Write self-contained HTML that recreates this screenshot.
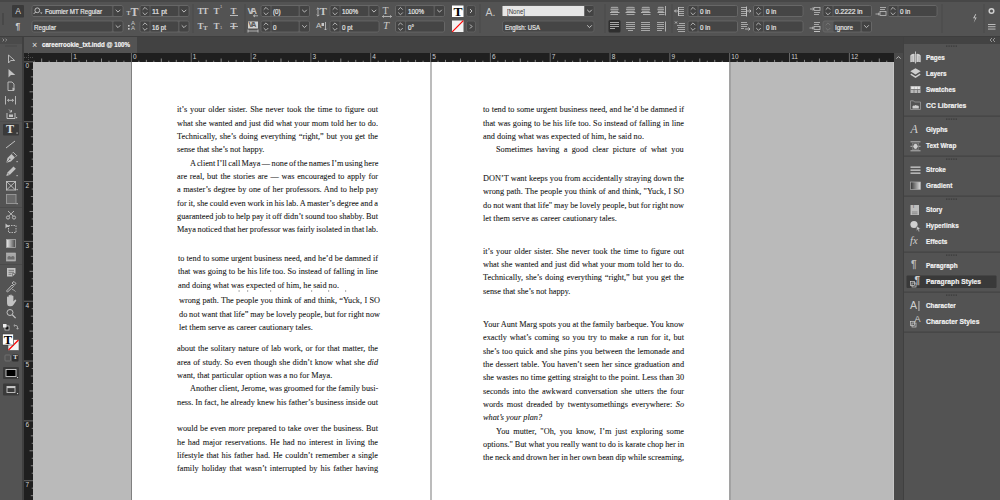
<!DOCTYPE html>
<html><head><meta charset="utf-8">
<style>
*{margin:0;padding:0;box-sizing:border-box}
html,body{width:1000px;height:500px;overflow:hidden;background:#535353;font-family:"Liberation Sans",sans-serif;position:relative}
.a{position:absolute}
.ct,.ic,.rl,.pl,.tx{position:absolute;white-space:pre;line-height:1}
.ct{font-size:7.6px;color:#e6e6e6;line-height:10px}
.ut{position:absolute;white-space:pre;line-height:10px;transform-origin:0 0;-webkit-text-stroke:0.2px currentColor}
.ic{line-height:1}
.rl{font-size:6.5px;color:#cfcfcf;line-height:7px}
.pl{font-size:8.2px;font-weight:bold;color:#ececec;line-height:10px}
.tx{transform-origin:0 0;font-family:"Liberation Serif",serif;font-size:8.27px;color:#161616;line-height:10px;-webkit-text-stroke:0.08px #161616}
#topstrip{left:0;top:0;width:1000px;height:2px;background:#474747}
#ctrl{left:0;top:2px;width:1000px;height:34px;background:#535353}
#tbar{left:0;top:36px;width:22px;height:464px;background:#535353}
#tbarhdr{left:0;top:36px;width:22px;height:8px;background:#4a4a4a}
#tsep{left:22px;top:36px;width:2px;height:464px;background:#404040}
#tabbar{left:24px;top:36px;width:880px;height:17px;background:#424242}
#tab{left:24px;top:36px;width:113px;height:17px;background:#535353}
#hruler{left:24px;top:53px;width:870px;height:9px;background:#1f1f1f}
#vruler{left:24px;top:53px;width:9px;height:447px;background:#1f1f1f}
#paste{left:33px;top:62px;width:861px;height:438px;background:#bababa}
#page1{left:132px;top:62px;width:298px;height:438px;background:#fff}
#page2{left:432px;top:62px;width:297px;height:438px;background:#fff}
#pb1{left:131px;top:62px;width:1px;height:438px;background:#808080}
#pb2{left:430px;top:62px;width:2px;height:438px;background:#bcbcbc}
#pb3{left:729px;top:62px;width:2px;height:438px;background:#a2a2a2}
#scroll{left:894px;top:53px;width:9px;height:447px;background:#4a4a4a}
#psep{left:903px;top:36px;width:1px;height:464px;background:#404040}
#panel{left:904px;top:44px;width:96px;height:456px;background:#535353}
#panelhdr{left:904px;top:36px;width:96px;height:8px;background:#434343}
svg{position:absolute;left:0;top:0}
</style></head><body>
<div class="a" id="topstrip"></div>
<div class="a" id="ctrl"></div>
<div class="a" id="tbar"></div>
<div class="a" id="tbarhdr"></div>
<div class="a" id="tsep"></div>
<div class="a" id="tabbar"></div>
<div class="a" id="tab"></div>
<div class="a" id="hruler"></div>
<div class="a" id="vruler"></div>
<div class="a" id="paste"></div>
<div class="a" id="page1"></div>
<div class="a" id="page2"></div>
<div class="a" id="pb1"></div>
<div class="a" id="pb2"></div>
<div class="a" id="pb3"></div>
<div class="a" id="scroll"></div>
<div class="a" id="psep"></div>
<div class="a" id="panelhdr"></div>
<div class="a" id="panel"></div>
<div class="a" style="left:0;top:35.5px;width:1000px;height:1px;background:#3e3e3e"></div>
<svg width="1000" height="500" viewBox="0 0 1000 500"><rect x="32.0" y="5.5" width="91.0" height="11" rx="2" fill="#5a5a5a" stroke="#676767" stroke-width="1"/><rect x="113.5" y="6" width="9" height="10" rx="1" fill="#434343"/><path d="M115.7 9.8L118.0 12.1L120.3 9.8" fill="none" stroke="#c8c8c8" stroke-width="0.9"/><rect x="32.5" y="6" width="79.5" height="10" rx="1" fill="#454545"/><rect x="32.0" y="21.0" width="91.0" height="11" rx="2" fill="#5a5a5a" stroke="#676767" stroke-width="1"/><rect x="113.5" y="21.5" width="9" height="10" rx="1" fill="#434343"/><path d="M115.7 25.3L118.0 27.6L120.3 25.3" fill="none" stroke="#c8c8c8" stroke-width="0.9"/><rect x="32.5" y="21.5" width="79.5" height="10" rx="1" fill="#454545"/><rect x="140.0" y="5.5" width="49.0" height="11" rx="2" fill="#5a5a5a" stroke="#676767" stroke-width="1"/><rect x="140.5" y="6" width="9" height="10" rx="1" fill="#434343"/><path d="M142.7 9.7L145.0 7.4L147.3 9.7" fill="none" stroke="#bdbdbd" stroke-width="0.9"/><path d="M142.7 12.5L145.0 14.799999999999999L147.3 12.5" fill="none" stroke="#bdbdbd" stroke-width="0.9"/><rect x="179.5" y="6" width="9" height="10" rx="1" fill="#434343"/><path d="M181.7 9.8L184.0 12.1L186.3 9.8" fill="none" stroke="#c8c8c8" stroke-width="0.9"/><rect x="150.5" y="6" width="27.5" height="10" rx="1" fill="#454545"/><rect x="140.0" y="21.0" width="49.0" height="11" rx="2" fill="#5a5a5a" stroke="#676767" stroke-width="1"/><rect x="140.5" y="21.5" width="9" height="10" rx="1" fill="#434343"/><path d="M142.7 25.2L145.0 22.9L147.3 25.2" fill="none" stroke="#bdbdbd" stroke-width="0.9"/><path d="M142.7 28.0L145.0 30.3L147.3 28.0" fill="none" stroke="#bdbdbd" stroke-width="0.9"/><rect x="179.5" y="21.5" width="9" height="10" rx="1" fill="#434343"/><path d="M181.7 25.3L184.0 27.6L186.3 25.3" fill="none" stroke="#c8c8c8" stroke-width="0.9"/><rect x="150.5" y="21.5" width="27.5" height="10" rx="1" fill="#454545"/><rect x="261.0" y="5.5" width="48.5" height="11" rx="2" fill="#5a5a5a" stroke="#676767" stroke-width="1"/><rect x="261.5" y="6" width="9" height="10" rx="1" fill="#434343"/><path d="M263.7 9.7L266.0 7.4L268.3 9.7" fill="none" stroke="#bdbdbd" stroke-width="0.9"/><path d="M263.7 12.5L266.0 14.799999999999999L268.3 12.5" fill="none" stroke="#bdbdbd" stroke-width="0.9"/><rect x="300" y="6" width="9" height="10" rx="1" fill="#434343"/><path d="M302.2 9.8L304.5 12.1L306.8 9.8" fill="none" stroke="#c8c8c8" stroke-width="0.9"/><rect x="271.5" y="6" width="27.0" height="10" rx="1" fill="#454545"/><rect x="261.0" y="21.0" width="48.5" height="11" rx="2" fill="#5a5a5a" stroke="#676767" stroke-width="1"/><rect x="261.5" y="21.5" width="9" height="10" rx="1" fill="#434343"/><path d="M263.7 25.2L266.0 22.9L268.3 25.2" fill="none" stroke="#bdbdbd" stroke-width="0.9"/><path d="M263.7 28.0L266.0 30.3L268.3 28.0" fill="none" stroke="#bdbdbd" stroke-width="0.9"/><rect x="300" y="21.5" width="9" height="10" rx="1" fill="#434343"/><path d="M302.2 25.3L304.5 27.6L306.8 25.3" fill="none" stroke="#c8c8c8" stroke-width="0.9"/><rect x="271.5" y="21.5" width="27.0" height="10" rx="1" fill="#454545"/><rect x="330.0" y="5.5" width="49.0" height="11" rx="2" fill="#5a5a5a" stroke="#676767" stroke-width="1"/><rect x="330.5" y="6" width="9" height="10" rx="1" fill="#434343"/><path d="M332.7 9.7L335.0 7.4L337.3 9.7" fill="none" stroke="#bdbdbd" stroke-width="0.9"/><path d="M332.7 12.5L335.0 14.799999999999999L337.3 12.5" fill="none" stroke="#bdbdbd" stroke-width="0.9"/><rect x="369.5" y="6" width="9" height="10" rx="1" fill="#434343"/><path d="M371.7 9.8L374.0 12.1L376.3 9.8" fill="none" stroke="#c8c8c8" stroke-width="0.9"/><rect x="340.5" y="6" width="27.5" height="10" rx="1" fill="#454545"/><rect x="330.0" y="21.0" width="49.0" height="11" rx="2" fill="#5a5a5a" stroke="#676767" stroke-width="1"/><rect x="330.5" y="21.5" width="9" height="10" rx="1" fill="#434343"/><path d="M332.7 25.2L335.0 22.9L337.3 25.2" fill="none" stroke="#bdbdbd" stroke-width="0.9"/><path d="M332.7 28.0L335.0 30.3L337.3 28.0" fill="none" stroke="#bdbdbd" stroke-width="0.9"/><rect x="340.5" y="21.5" width="38.0" height="10" rx="1" fill="#454545"/><rect x="395.5" y="5.5" width="49" height="11" rx="2" fill="#5a5a5a" stroke="#676767" stroke-width="1"/><rect x="396" y="6" width="9" height="10" rx="1" fill="#434343"/><path d="M398.2 9.7L400.5 7.4L402.8 9.7" fill="none" stroke="#bdbdbd" stroke-width="0.9"/><path d="M398.2 12.5L400.5 14.799999999999999L402.8 12.5" fill="none" stroke="#bdbdbd" stroke-width="0.9"/><rect x="435" y="6" width="9" height="10" rx="1" fill="#434343"/><path d="M437.2 9.8L439.5 12.1L441.8 9.8" fill="none" stroke="#c8c8c8" stroke-width="0.9"/><rect x="406" y="6" width="27.5" height="10" rx="1" fill="#454545"/><rect x="395.5" y="21.0" width="49" height="11" rx="2" fill="#5a5a5a" stroke="#676767" stroke-width="1"/><rect x="396" y="21.5" width="9" height="10" rx="1" fill="#434343"/><path d="M398.2 25.2L400.5 22.9L402.8 25.2" fill="none" stroke="#bdbdbd" stroke-width="0.9"/><path d="M398.2 28.0L400.5 30.3L402.8 28.0" fill="none" stroke="#bdbdbd" stroke-width="0.9"/><rect x="406" y="21.5" width="38" height="10" rx="1" fill="#454545"/><rect x="688.0" y="5.5" width="49.5" height="11" rx="2" fill="#5a5a5a" stroke="#676767" stroke-width="1"/><rect x="688.5" y="6" width="9" height="10" rx="1" fill="#434343"/><path d="M690.7 9.7L693.0 7.4L695.3 9.7" fill="none" stroke="#bdbdbd" stroke-width="0.9"/><path d="M690.7 12.5L693.0 14.799999999999999L695.3 12.5" fill="none" stroke="#bdbdbd" stroke-width="0.9"/><rect x="698.5" y="6" width="38.5" height="10" rx="1" fill="#454545"/><rect x="688.0" y="21.0" width="49.5" height="11" rx="2" fill="#5a5a5a" stroke="#676767" stroke-width="1"/><rect x="688.5" y="21.5" width="9" height="10" rx="1" fill="#434343"/><path d="M690.7 25.2L693.0 22.9L695.3 25.2" fill="none" stroke="#bdbdbd" stroke-width="0.9"/><path d="M690.7 28.0L693.0 30.3L695.3 28.0" fill="none" stroke="#bdbdbd" stroke-width="0.9"/><rect x="698.5" y="21.5" width="38.5" height="10" rx="1" fill="#454545"/><rect x="753.5" y="5.5" width="49.5" height="11" rx="2" fill="#5a5a5a" stroke="#676767" stroke-width="1"/><rect x="754" y="6" width="9" height="10" rx="1" fill="#434343"/><path d="M756.2 9.7L758.5 7.4L760.8 9.7" fill="none" stroke="#bdbdbd" stroke-width="0.9"/><path d="M756.2 12.5L758.5 14.799999999999999L760.8 12.5" fill="none" stroke="#bdbdbd" stroke-width="0.9"/><rect x="764" y="6" width="38.5" height="10" rx="1" fill="#454545"/><rect x="753.5" y="21.0" width="49.5" height="11" rx="2" fill="#5a5a5a" stroke="#676767" stroke-width="1"/><rect x="754" y="21.5" width="9" height="10" rx="1" fill="#434343"/><path d="M756.2 25.2L758.5 22.9L760.8 25.2" fill="none" stroke="#bdbdbd" stroke-width="0.9"/><path d="M756.2 28.0L758.5 30.3L760.8 28.0" fill="none" stroke="#bdbdbd" stroke-width="0.9"/><rect x="764" y="21.5" width="38.5" height="10" rx="1" fill="#454545"/><rect x="823.0" y="5.5" width="48.5" height="11" rx="2" fill="#5a5a5a" stroke="#676767" stroke-width="1"/><rect x="823.5" y="6" width="9" height="10" rx="1" fill="#434343"/><path d="M825.7 9.7L828.0 7.4L830.3 9.7" fill="none" stroke="#bdbdbd" stroke-width="0.9"/><path d="M825.7 12.5L828.0 14.799999999999999L830.3 12.5" fill="none" stroke="#bdbdbd" stroke-width="0.9"/><rect x="833.5" y="6" width="37.5" height="10" rx="1" fill="#454545"/><rect x="823.0" y="21.0" width="48.5" height="11" rx="2" fill="#5a5a5a" stroke="#676767" stroke-width="1"/><path d="M825.7 25.2L828.0 22.9L830.3 25.2" fill="none" stroke="#777" stroke-width="0.9"/><path d="M825.7 28.0L828.0 30.3L830.3 28.0" fill="none" stroke="#777" stroke-width="0.9"/><rect x="862" y="21.5" width="9" height="10" rx="1" fill="#434343"/><path d="M864.2 25.3L866.5 27.6L868.8 25.3" fill="none" stroke="#c8c8c8" stroke-width="0.9"/><rect x="833.5" y="21.5" width="27.0" height="10" rx="1" fill="#454545"/><rect x="888.0" y="5.5" width="49.0" height="11" rx="2" fill="#5a5a5a" stroke="#676767" stroke-width="1"/><rect x="888.5" y="6" width="9" height="10" rx="1" fill="#434343"/><path d="M890.7 9.7L893.0 7.4L895.3 9.7" fill="none" stroke="#bdbdbd" stroke-width="0.9"/><path d="M890.7 12.5L893.0 14.799999999999999L895.3 12.5" fill="none" stroke="#bdbdbd" stroke-width="0.9"/><rect x="898.5" y="6" width="38.0" height="10" rx="1" fill="#454545"/><rect x="502.5" y="5.5" width="91.5" height="11" rx="2" fill="#4b4b4b" stroke="#5f5f5f"/><rect x="502.5" y="6" width="82" height="10" fill="#e6e6e6"/><rect x="584.5" y="6" width="9" height="10" fill="#434343"/><path d="M587.2 9.8L589.5 12.1L591.8 9.8" fill="none" stroke="#d0d0d0" stroke-width="0.9"/><rect x="502.5" y="21.0" width="91.5" height="11" rx="2" fill="#454545" stroke="#5f5f5f"/><path d="M587.2 25.3L589.5 27.6L591.8 25.3" fill="none" stroke="#d0d0d0" stroke-width="0.9"/><rect x="192.5" y="4" width="1" height="29" fill="#4a4a4a"/><rect x="244.5" y="4" width="1" height="29" fill="#4a4a4a"/><rect x="479.5" y="4" width="1" height="29" fill="#4a4a4a"/><rect x="604.5" y="4" width="1" height="29" fill="#4a4a4a"/><rect x="671.5" y="4" width="1" height="29" fill="#4a4a4a"/><rect x="941.5" y="4" width="1" height="29" fill="#4a4a4a"/><rect x="983.5" y="4" width="1" height="29" fill="#4a4a4a"/><rect x="2.5" y="13" width="1" height="12" fill="#3f3f3f"/><rect x="12" y="5" width="12" height="12.5" rx="1" fill="#3a3a3a"/><circle cx="37.3" cy="10.3" r="2.4" fill="none" stroke="#c8c8c8" stroke-width="0.9"/><path d="M35.6 12L33.6 14" stroke="#c8c8c8" stroke-width="1"/><path d="M40 12.5h2.5l-1.25 1.4z" fill="#c8c8c8"/><rect x="128" y="25" width="1.6" height="1.6" fill="#c8c8c8"/><rect x="128" y="28" width="1.6" height="1.6" fill="#c8c8c8"/><rect x="230" y="15" width="8" height="0.9" fill="#c8c8c8"/><rect x="230" y="26" width="8" height="0.9" fill="#c8c8c8"/><path d="M253.5 15.8h4.5M253.5 15.8l1.5-1.2M253.5 15.8l1.5 1.2" stroke="#c8c8c8" stroke-width="0.8" fill="none"/><rect x="248" y="21.5" width="10" height="7" fill="#d0d0d0"/><path d="M248 31h10M248 29.5v3M258 29.5v3" stroke="#c8c8c8" stroke-width="0.8"/><path d="M318 8v8M316.6 9.2l1.4-1.4 1.4 1.4M316.6 14.8l1.4 1.4 1.4-1.4" stroke="#c8c8c8" stroke-width="0.8" fill="none"/><path d="M325.5 22v8M324.3 28.8l1.2 1.2 1.2-1.2" stroke="#c8c8c8" stroke-width="0.8" fill="none"/><rect x="321.5" y="23" width="2.5" height="3" fill="#c8c8c8"/><path d="M382.5 16.5h9M383.7 15.3l-1.2 1.2 1.2 1.2M390.3 15.3l1.2 1.2-1.2 1.2" stroke="#c8c8c8" stroke-width="0.8" fill="none"/><rect x="452" y="5.5" width="11.5" height="11.5" fill="#fff"/><rect x="452" y="20.5" width="11.5" height="11.5" fill="#f2f2f2"/><path d="M452.2 31.8L463.3 20.7" stroke="#f00" stroke-width="1.2"/><rect x="466.5" y="5.5" width="9" height="11" rx="2" fill="#454545" stroke="#5f5f5f"/><path d="M470 9l2 2l-2 2" stroke="#cfcfcf" stroke-width="0.9" fill="none"/><rect x="466.5" y="21.0" width="9" height="11" rx="2" fill="#454545" stroke="#5f5f5f"/><path d="M470 24.5l2 2l-2 2" stroke="#cfcfcf" stroke-width="0.9" fill="none"/><rect x="610.5" y="6.5" width="8.0" height="5" rx="1.5" fill="#747474"/><rect x="611.0" y="7" width="7.0" height="0.9" fill="#a4a4a4"/><rect x="610.5" y="9" width="8.0" height="0.9" fill="#a4a4a4"/><rect x="611.0" y="11" width="7.0" height="0.9" fill="#a4a4a4"/><rect x="610" y="12" width="9.5" height="1" fill="#b4b4b4"/><rect x="610.5" y="14" width="7.5" height="1" fill="#a8a8a8"/><rect x="626.0" y="6.5" width="9.0" height="5" rx="2.5" fill="#747474"/><rect x="626.5" y="7" width="8.0" height="0.9" fill="#a4a4a4"/><rect x="626.0" y="9" width="9.0" height="0.9" fill="#a4a4a4"/><rect x="626.5" y="11" width="8.0" height="0.9" fill="#a4a4a4"/><rect x="625.5" y="12" width="10" height="1" fill="#b4b4b4"/><rect x="626.5" y="14" width="8" height="1" fill="#a8a8a8"/><rect x="641.5" y="6.5" width="8.5" height="5" rx="1.5" fill="#747474"/><rect x="642.0" y="7" width="7.5" height="0.9" fill="#a4a4a4"/><rect x="641.5" y="9" width="8.5" height="0.9" fill="#a4a4a4"/><rect x="642.0" y="11" width="7.5" height="0.9" fill="#a4a4a4"/><rect x="641" y="12" width="9.5" height="1" fill="#b4b4b4"/><rect x="643" y="14" width="7.5" height="1" fill="#a8a8a8"/><rect x="657.5" y="6.5" width="6.5" height="5" rx="1.5" fill="#747474"/><rect x="658.0" y="7" width="5.5" height="0.9" fill="#a4a4a4"/><rect x="657.5" y="9" width="6.5" height="0.9" fill="#a4a4a4"/><rect x="658.0" y="11" width="5.5" height="0.9" fill="#a4a4a4"/><rect x="657.5" y="12" width="7" height="1" fill="#b4b4b4"/><rect x="659" y="14" width="5.5" height="1" fill="#a8a8a8"/><rect x="665" y="6" width="1" height="9.5" fill="#b0b0b0"/><rect x="608.5" y="20" width="12" height="12.5" rx="1.5" fill="#2f2f2f"/><rect x="610" y="22" width="9" height="1" fill="#a8a8a8"/><rect x="610" y="24" width="9" height="1" fill="#a8a8a8"/><rect x="610" y="26" width="9" height="1" fill="#a8a8a8"/><rect x="610" y="28" width="5" height="1" fill="#a8a8a8"/><rect x="626" y="22" width="9" height="1" fill="#a8a8a8"/><rect x="626" y="24" width="9" height="1" fill="#a8a8a8"/><rect x="626" y="26" width="9" height="1" fill="#a8a8a8"/><rect x="626" y="28" width="9" height="1" fill="#a8a8a8"/><rect x="628" y="30" width="5" height="1" fill="#a8a8a8"/><rect x="641" y="22" width="9" height="1" fill="#a8a8a8"/><rect x="641" y="24" width="9" height="1" fill="#a8a8a8"/><rect x="641" y="26" width="9" height="1" fill="#a8a8a8"/><rect x="641" y="28" width="9" height="1" fill="#a8a8a8"/><rect x="641" y="30" width="9" height="1" fill="#a8a8a8"/><rect x="657" y="22" width="7" height="1" fill="#a8a8a8"/><rect x="657" y="24" width="7" height="1" fill="#a8a8a8"/><rect x="657" y="26" width="7" height="1" fill="#a8a8a8"/><rect x="657" y="28" width="7" height="1" fill="#a8a8a8"/><rect x="657" y="30" width="5" height="1" fill="#a8a8a8"/><rect x="665" y="21.5" width="1" height="10" fill="#b0b0b0"/><rect x="679" y="7" width="5" height="1" fill="#a8a8a8"/><rect x="678" y="9" width="6" height="1" fill="#a8a8a8"/><rect x="679" y="11" width="5" height="1" fill="#a8a8a8"/><rect x="678" y="13" width="6" height="1" fill="#a8a8a8"/><rect x="679" y="15" width="5" height="1" fill="#a8a8a8"/><path d="M674.5 11h4M676 9.5l-1.5 1.5 1.5 1.5" stroke="#c0c0c0" stroke-width="0.9" fill="none"/><rect x="678" y="7" width="1" height="9" fill="#c0c0c0"/><rect x="679" y="23" width="6" height="1" fill="#a8a8a8"/><rect x="677" y="25" width="8" height="1" fill="#a8a8a8"/><rect x="678" y="27" width="7" height="1" fill="#a8a8a8"/><rect x="677" y="29" width="8" height="1" fill="#a8a8a8"/><rect x="678" y="31" width="7" height="1" fill="#a8a8a8"/><path d="M675 21.5l2 2M677 21.5l-2 2" stroke="#c0c0c0" stroke-width="0.9"/><rect x="741" y="7" width="5" height="1" fill="#a8a8a8"/><rect x="741" y="9" width="6" height="1" fill="#a8a8a8"/><rect x="741" y="11" width="5" height="1" fill="#a8a8a8"/><rect x="741" y="13" width="6" height="1" fill="#a8a8a8"/><rect x="741" y="15" width="5" height="1" fill="#a8a8a8"/><rect x="746" y="6.5" width="1" height="10" fill="#c0c0c0"/><path d="M747 11h4M749.5 9.5l1.5 1.5-1.5 1.5" stroke="#c0c0c0" stroke-width="0.9" fill="none"/><rect x="741" y="22" width="6" height="1" fill="#a8a8a8"/><rect x="741" y="24" width="7" height="1" fill="#a8a8a8"/><rect x="741" y="26" width="6" height="1" fill="#a8a8a8"/><rect x="741" y="28" width="3" height="1" fill="#a8a8a8"/><path d="M745 29h5M748.5 27.5l1.5 1.5-1.5 1.5" stroke="#c0c0c0" stroke-width="0.9" fill="none"/><rect x="814" y="7.5" width="6" height="3" fill="none" stroke="#c0c0c0" stroke-width="0.8"/><rect x="814" y="12" width="6" height="1" fill="#a8a8a8"/><rect x="814" y="14" width="5" height="1" fill="#a8a8a8"/><path d="M810 9h4M812.5 7.8l1.3 1.2-1.3 1.2" stroke="#c0c0c0" stroke-width="0.8" fill="none"/><rect x="814" y="22" width="6" height="1" fill="#a8a8a8"/><rect x="814" y="24" width="5" height="1" fill="#a8a8a8"/><rect x="814" y="26.5" width="6" height="3" fill="none" stroke="#c0c0c0" stroke-width="0.8"/><rect x="814" y="31" width="6" height="1" fill="#c0c0c0"/><path d="M809.5 28h4M812 26.8l1.3 1.2-1.3 1.2" stroke="#c0c0c0" stroke-width="0.8" fill="none"/><rect x="880" y="7" width="6" height="1" fill="#a8a8a8"/><rect x="880" y="9" width="5" height="1" fill="#a8a8a8"/><rect x="880" y="11.5" width="6" height="4" fill="none" stroke="#c0c0c0" stroke-width="0.8"/><path d="M875.5 14h4M878 12.8l1.3 1.2-1.3 1.2" stroke="#c0c0c0" stroke-width="0.8" fill="none"/><path d="M975.5 14l-2.5 4.3h2.2l-1.5 4.5 3-5.2h-2.1l1.6-3.4z" fill="#c8c8c8"/><circle cx="991.5" cy="11" r="2.3" fill="none" stroke="#d0d0d0" stroke-width="1.5"/><rect x="988" y="24" width="7.5" height="0.9" fill="#c8c8c8"/><rect x="988" y="26.3" width="7.5" height="0.9" fill="#c8c8c8"/><rect x="988" y="28.6" width="7.5" height="0.9" fill="#c8c8c8"/><rect x="33.68" y="60.70" width="1" height="1.3" fill="#858585"/><rect x="41.16" y="58.50" width="1" height="3.5" fill="#858585"/><rect x="48.63" y="60.70" width="1" height="1.3" fill="#858585"/><rect x="56.11" y="59.80" width="1" height="2.2" fill="#858585"/><rect x="63.59" y="60.70" width="1" height="1.3" fill="#858585"/><rect x="71.07" y="53" width="1" height="9" fill="#6a6a6a"/><rect x="78.55" y="60.70" width="1" height="1.3" fill="#858585"/><rect x="86.03" y="59.80" width="1" height="2.2" fill="#858585"/><rect x="93.51" y="60.70" width="1" height="1.3" fill="#858585"/><rect x="100.99" y="58.50" width="1" height="3.5" fill="#858585"/><rect x="108.46" y="60.70" width="1" height="1.3" fill="#858585"/><rect x="115.94" y="59.80" width="1" height="2.2" fill="#858585"/><rect x="123.42" y="60.70" width="1" height="1.3" fill="#858585"/><rect x="130.90" y="53" width="1" height="9" fill="#6a6a6a"/><rect x="138.38" y="60.70" width="1" height="1.3" fill="#858585"/><rect x="145.86" y="59.80" width="1" height="2.2" fill="#858585"/><rect x="153.34" y="60.70" width="1" height="1.3" fill="#858585"/><rect x="160.81" y="58.50" width="1" height="3.5" fill="#858585"/><rect x="168.29" y="60.70" width="1" height="1.3" fill="#858585"/><rect x="175.77" y="59.80" width="1" height="2.2" fill="#858585"/><rect x="183.25" y="60.70" width="1" height="1.3" fill="#858585"/><rect x="190.73" y="53" width="1" height="9" fill="#6a6a6a"/><rect x="198.21" y="60.70" width="1" height="1.3" fill="#858585"/><rect x="205.69" y="59.80" width="1" height="2.2" fill="#858585"/><rect x="213.17" y="60.70" width="1" height="1.3" fill="#858585"/><rect x="220.65" y="58.50" width="1" height="3.5" fill="#858585"/><rect x="228.12" y="60.70" width="1" height="1.3" fill="#858585"/><rect x="235.60" y="59.80" width="1" height="2.2" fill="#858585"/><rect x="243.08" y="60.70" width="1" height="1.3" fill="#858585"/><rect x="250.56" y="53" width="1" height="9" fill="#6a6a6a"/><rect x="258.04" y="60.70" width="1" height="1.3" fill="#858585"/><rect x="265.52" y="59.80" width="1" height="2.2" fill="#858585"/><rect x="273.00" y="60.70" width="1" height="1.3" fill="#858585"/><rect x="280.48" y="58.50" width="1" height="3.5" fill="#858585"/><rect x="287.95" y="60.70" width="1" height="1.3" fill="#858585"/><rect x="295.43" y="59.80" width="1" height="2.2" fill="#858585"/><rect x="302.91" y="60.70" width="1" height="1.3" fill="#858585"/><rect x="310.39" y="53" width="1" height="9" fill="#6a6a6a"/><rect x="317.87" y="60.70" width="1" height="1.3" fill="#858585"/><rect x="325.35" y="59.80" width="1" height="2.2" fill="#858585"/><rect x="332.83" y="60.70" width="1" height="1.3" fill="#858585"/><rect x="340.31" y="58.50" width="1" height="3.5" fill="#858585"/><rect x="347.78" y="60.70" width="1" height="1.3" fill="#858585"/><rect x="355.26" y="59.80" width="1" height="2.2" fill="#858585"/><rect x="362.74" y="60.70" width="1" height="1.3" fill="#858585"/><rect x="370.22" y="53" width="1" height="9" fill="#6a6a6a"/><rect x="377.70" y="60.70" width="1" height="1.3" fill="#858585"/><rect x="385.18" y="59.80" width="1" height="2.2" fill="#858585"/><rect x="392.66" y="60.70" width="1" height="1.3" fill="#858585"/><rect x="400.13" y="58.50" width="1" height="3.5" fill="#858585"/><rect x="407.61" y="60.70" width="1" height="1.3" fill="#858585"/><rect x="415.09" y="59.80" width="1" height="2.2" fill="#858585"/><rect x="422.57" y="60.70" width="1" height="1.3" fill="#858585"/><rect x="430.05" y="53" width="1" height="9" fill="#6a6a6a"/><rect x="437.53" y="60.70" width="1" height="1.3" fill="#858585"/><rect x="445.01" y="59.80" width="1" height="2.2" fill="#858585"/><rect x="452.49" y="60.70" width="1" height="1.3" fill="#858585"/><rect x="459.97" y="58.50" width="1" height="3.5" fill="#858585"/><rect x="467.44" y="60.70" width="1" height="1.3" fill="#858585"/><rect x="474.92" y="59.80" width="1" height="2.2" fill="#858585"/><rect x="482.40" y="60.70" width="1" height="1.3" fill="#858585"/><rect x="489.88" y="53" width="1" height="9" fill="#6a6a6a"/><rect x="497.36" y="60.70" width="1" height="1.3" fill="#858585"/><rect x="504.84" y="59.80" width="1" height="2.2" fill="#858585"/><rect x="512.32" y="60.70" width="1" height="1.3" fill="#858585"/><rect x="519.79" y="58.50" width="1" height="3.5" fill="#858585"/><rect x="527.27" y="60.70" width="1" height="1.3" fill="#858585"/><rect x="534.75" y="59.80" width="1" height="2.2" fill="#858585"/><rect x="542.23" y="60.70" width="1" height="1.3" fill="#858585"/><rect x="549.71" y="53" width="1" height="9" fill="#6a6a6a"/><rect x="557.19" y="60.70" width="1" height="1.3" fill="#858585"/><rect x="564.67" y="59.80" width="1" height="2.2" fill="#858585"/><rect x="572.15" y="60.70" width="1" height="1.3" fill="#858585"/><rect x="579.62" y="58.50" width="1" height="3.5" fill="#858585"/><rect x="587.10" y="60.70" width="1" height="1.3" fill="#858585"/><rect x="594.58" y="59.80" width="1" height="2.2" fill="#858585"/><rect x="602.06" y="60.70" width="1" height="1.3" fill="#858585"/><rect x="609.54" y="53" width="1" height="9" fill="#6a6a6a"/><rect x="617.02" y="60.70" width="1" height="1.3" fill="#858585"/><rect x="624.50" y="59.80" width="1" height="2.2" fill="#858585"/><rect x="631.98" y="60.70" width="1" height="1.3" fill="#858585"/><rect x="639.46" y="58.50" width="1" height="3.5" fill="#858585"/><rect x="646.93" y="60.70" width="1" height="1.3" fill="#858585"/><rect x="654.41" y="59.80" width="1" height="2.2" fill="#858585"/><rect x="661.89" y="60.70" width="1" height="1.3" fill="#858585"/><rect x="669.37" y="53" width="1" height="9" fill="#6a6a6a"/><rect x="676.85" y="60.70" width="1" height="1.3" fill="#858585"/><rect x="684.33" y="59.80" width="1" height="2.2" fill="#858585"/><rect x="691.81" y="60.70" width="1" height="1.3" fill="#858585"/><rect x="699.28" y="58.50" width="1" height="3.5" fill="#858585"/><rect x="706.76" y="60.70" width="1" height="1.3" fill="#858585"/><rect x="714.24" y="59.80" width="1" height="2.2" fill="#858585"/><rect x="721.72" y="60.70" width="1" height="1.3" fill="#858585"/><rect x="729.20" y="53" width="1" height="9" fill="#6a6a6a"/><rect x="736.68" y="60.70" width="1" height="1.3" fill="#858585"/><rect x="744.16" y="59.80" width="1" height="2.2" fill="#858585"/><rect x="751.64" y="60.70" width="1" height="1.3" fill="#858585"/><rect x="759.12" y="58.50" width="1" height="3.5" fill="#858585"/><rect x="766.59" y="60.70" width="1" height="1.3" fill="#858585"/><rect x="774.07" y="59.80" width="1" height="2.2" fill="#858585"/><rect x="781.55" y="60.70" width="1" height="1.3" fill="#858585"/><rect x="789.03" y="53" width="1" height="9" fill="#6a6a6a"/><rect x="796.51" y="60.70" width="1" height="1.3" fill="#858585"/><rect x="803.99" y="59.80" width="1" height="2.2" fill="#858585"/><rect x="811.47" y="60.70" width="1" height="1.3" fill="#858585"/><rect x="818.94" y="58.50" width="1" height="3.5" fill="#858585"/><rect x="826.42" y="60.70" width="1" height="1.3" fill="#858585"/><rect x="833.90" y="59.80" width="1" height="2.2" fill="#858585"/><rect x="841.38" y="60.70" width="1" height="1.3" fill="#858585"/><rect x="848.86" y="53" width="1" height="9" fill="#6a6a6a"/><rect x="856.34" y="60.70" width="1" height="1.3" fill="#858585"/><rect x="863.82" y="59.80" width="1" height="2.2" fill="#858585"/><rect x="871.30" y="60.70" width="1" height="1.3" fill="#858585"/><rect x="878.77" y="58.50" width="1" height="3.5" fill="#858585"/><rect x="886.25" y="60.70" width="1" height="1.3" fill="#858585"/><rect x="24" y="61.40" width="9" height="1" fill="#6a6a6a"/><rect x="31.70" y="68.88" width="1.3" height="1" fill="#858585"/><rect x="30.80" y="76.36" width="2.2" height="1" fill="#858585"/><rect x="31.70" y="83.84" width="1.3" height="1" fill="#858585"/><rect x="29.50" y="91.31" width="3.5" height="1" fill="#858585"/><rect x="31.70" y="98.79" width="1.3" height="1" fill="#858585"/><rect x="30.80" y="106.27" width="2.2" height="1" fill="#858585"/><rect x="31.70" y="113.75" width="1.3" height="1" fill="#858585"/><rect x="24" y="121.23" width="9" height="1" fill="#6a6a6a"/><rect x="31.70" y="128.71" width="1.3" height="1" fill="#858585"/><rect x="30.80" y="136.19" width="2.2" height="1" fill="#858585"/><rect x="31.70" y="143.67" width="1.3" height="1" fill="#858585"/><rect x="29.50" y="151.15" width="3.5" height="1" fill="#858585"/><rect x="31.70" y="158.62" width="1.3" height="1" fill="#858585"/><rect x="30.80" y="166.10" width="2.2" height="1" fill="#858585"/><rect x="31.70" y="173.58" width="1.3" height="1" fill="#858585"/><rect x="24" y="181.06" width="9" height="1" fill="#6a6a6a"/><rect x="31.70" y="188.54" width="1.3" height="1" fill="#858585"/><rect x="30.80" y="196.02" width="2.2" height="1" fill="#858585"/><rect x="31.70" y="203.50" width="1.3" height="1" fill="#858585"/><rect x="29.50" y="210.97" width="3.5" height="1" fill="#858585"/><rect x="31.70" y="218.45" width="1.3" height="1" fill="#858585"/><rect x="30.80" y="225.93" width="2.2" height="1" fill="#858585"/><rect x="31.70" y="233.41" width="1.3" height="1" fill="#858585"/><rect x="24" y="240.89" width="9" height="1" fill="#6a6a6a"/><rect x="31.70" y="248.37" width="1.3" height="1" fill="#858585"/><rect x="30.80" y="255.85" width="2.2" height="1" fill="#858585"/><rect x="31.70" y="263.33" width="1.3" height="1" fill="#858585"/><rect x="29.50" y="270.81" width="3.5" height="1" fill="#858585"/><rect x="31.70" y="278.28" width="1.3" height="1" fill="#858585"/><rect x="30.80" y="285.76" width="2.2" height="1" fill="#858585"/><rect x="31.70" y="293.24" width="1.3" height="1" fill="#858585"/><rect x="24" y="300.72" width="9" height="1" fill="#6a6a6a"/><rect x="31.70" y="308.20" width="1.3" height="1" fill="#858585"/><rect x="30.80" y="315.68" width="2.2" height="1" fill="#858585"/><rect x="31.70" y="323.16" width="1.3" height="1" fill="#858585"/><rect x="29.50" y="330.63" width="3.5" height="1" fill="#858585"/><rect x="31.70" y="338.11" width="1.3" height="1" fill="#858585"/><rect x="30.80" y="345.59" width="2.2" height="1" fill="#858585"/><rect x="31.70" y="353.07" width="1.3" height="1" fill="#858585"/><rect x="24" y="360.55" width="9" height="1" fill="#6a6a6a"/><rect x="31.70" y="368.03" width="1.3" height="1" fill="#858585"/><rect x="30.80" y="375.51" width="2.2" height="1" fill="#858585"/><rect x="31.70" y="382.99" width="1.3" height="1" fill="#858585"/><rect x="29.50" y="390.46" width="3.5" height="1" fill="#858585"/><rect x="31.70" y="397.94" width="1.3" height="1" fill="#858585"/><rect x="30.80" y="405.42" width="2.2" height="1" fill="#858585"/><rect x="31.70" y="412.90" width="1.3" height="1" fill="#858585"/><rect x="24" y="420.38" width="9" height="1" fill="#6a6a6a"/><rect x="31.70" y="427.86" width="1.3" height="1" fill="#858585"/><rect x="30.80" y="435.34" width="2.2" height="1" fill="#858585"/><rect x="31.70" y="442.82" width="1.3" height="1" fill="#858585"/><rect x="29.50" y="450.29" width="3.5" height="1" fill="#858585"/><rect x="31.70" y="457.77" width="1.3" height="1" fill="#858585"/><rect x="30.80" y="465.25" width="2.2" height="1" fill="#858585"/><rect x="31.70" y="472.73" width="1.3" height="1" fill="#858585"/><rect x="24" y="480.21" width="9" height="1" fill="#6a6a6a"/><rect x="31.70" y="487.69" width="1.3" height="1" fill="#858585"/><rect x="30.80" y="495.17" width="2.2" height="1" fill="#858585"/><path d="M24 57.5h9M28.5 53v9" stroke="#5a5a5a" stroke-width="0.8" stroke-dasharray="1 1"/><rect x="893" y="62" width="1" height="438" fill="#c6c6c6"/><path d="M896.3 58.6l2.2-2 2.2 2" stroke="#bbb" stroke-width="0.9" fill="none"/><g fill="#3e3e3e"><rect x="5.5" y="45.5" width="1" height="1"/><rect x="7.5" y="45.5" width="1" height="1"/><rect x="9.5" y="45.5" width="1" height="1"/><rect x="11.5" y="45.5" width="1" height="1"/><rect x="13.5" y="45.5" width="1" height="1"/><rect x="15.5" y="45.5" width="1" height="1"/></g><path d="M2.6 38.6l1.4 1.4-1.4 1.4M5.4 38.6l1.4 1.4-1.4 1.4" stroke="#b0b0b0" stroke-width="0.7" fill="none"/><path d="M8.5 55v8l2.2-2.5h4z" fill="none" stroke="#c2c2c2" stroke-width="0.9" stroke-linejoin="round"/><path d="M8.5 69v8.5l2.4-2.6h4.4z" fill="#c2c2c2"/><path d="M8 82h4l2 2v6.5H8z" fill="none" stroke="#c2c2c2" stroke-width="0.9"/><path d="M12.5 87.5l2.5 1.5-2.5 1.5z" fill="#c2c2c2"/><path d="M5.5 96v8.5M15.5 96v8.5M7.5 100.3h6M9 99l-1.5 1.3 1.5 1.3M12 99l1.5 1.3-1.5 1.3" stroke="#c2c2c2" stroke-width="0.9" fill="none"/><path d="M7 113v5.5h8V113" stroke="#c2c2c2" stroke-width="1" fill="none"/><rect x="9" y="114.5" width="4" height="2.5" fill="#c2c2c2"/><path d="M9 109.5l2.5 2.5M11.5 110v2h-2" stroke="#c2c2c2" stroke-width="0.9" fill="none"/><rect x="16" y="117" width="1.2" height="1.2" fill="#c2c2c2"/><rect x="3" y="124" width="16" height="11.5" rx="1" fill="#3a3a3a"/><rect x="16.5" y="132.5" width="1.2" height="1.2" fill="#c2c2c2"/><path d="M6 148l9-7" stroke="#c2c2c2" stroke-width="1"/><path d="M6.3 162.7l1.2-4.6 4-4 3.4 3.4-4 4z" fill="#c2c2c2"/><path d="M12.3 153.3l1-1 3.4 3.4-1 1" stroke="#c2c2c2" stroke-width="0.9" fill="none"/><path d="M6.5 162.5l3-3" stroke="#535353" stroke-width="0.6"/><circle cx="9.8" cy="159.2" r="0.8" fill="#535353"/><rect x="16.5" y="161" width="1.2" height="1.2" fill="#c2c2c2"/><path d="M6.3 176l0.9-3.3 6.3-6.3 2.4 2.4-6.3 6.3z" fill="#c2c2c2"/><path d="M7.2 172.7l2.4 2.4" stroke="#535353" stroke-width="0.6"/><rect x="16.5" y="175" width="1.2" height="1.2" fill="#c2c2c2"/><rect x="6.5" y="181.5" width="9" height="8.5" fill="none" stroke="#c2c2c2" stroke-width="0.9"/><path d="M6.5 181.5l9 8.5M15.5 181.5l-9 8.5" stroke="#c2c2c2" stroke-width="0.9"/><rect x="16.5" y="189" width="1.2" height="1.2" fill="#c2c2c2"/><rect x="6.5" y="194.5" width="9.5" height="9" fill="#6a6a6a" stroke="#9a9a9a" stroke-width="0.9"/><rect x="16.5" y="203" width="1.2" height="1.2" fill="#c2c2c2"/><circle cx="8" cy="217.5" r="1.6" fill="none" stroke="#c2c2c2" stroke-width="0.9"/><circle cx="14" cy="217.5" r="1.6" fill="none" stroke="#c2c2c2" stroke-width="0.9"/><path d="M8.8 216L14 211M13.2 216L8 211" stroke="#c2c2c2" stroke-width="0.9"/><rect x="8.5" y="225.5" width="7.5" height="7" fill="none" stroke="#c2c2c2" stroke-width="0.9" stroke-dasharray="1.5 1"/><path d="M5.5 223.5v5l1.5-1.5h3z" fill="#c2c2c2"/><defs><linearGradient id="gr" x1="0" x2="1"><stop offset="0" stop-color="#eee"/><stop offset="1" stop-color="#444"/></linearGradient><radialGradient id="gf"><stop offset="0" stop-color="#333"/><stop offset="1" stop-color="#ccc"/></radialGradient></defs><rect x="6.5" y="239.5" width="9" height="8" fill="url(#gr)" stroke="#aaa" stroke-width="0.8"/><rect x="6.5" y="253" width="9" height="8" fill="#a8a8a8" stroke="#bbb" stroke-width="0.6"/><path d="M7.5 259.5v-2.5q1.7-2 3.5 0q1.8-2 3.5 0v2.5z" fill="#6e6e6e"/><path d="M7 268h8.5v5.5l-3 3H7z" fill="#c2c2c2"/><path d="M8.5 270.3h5.5M8.5 272.3h5.5M8.5 274.3h3" stroke="#555" stroke-width="0.7"/><path d="M12.5 276.5v-3h3" fill="none" stroke="#555" stroke-width="0.6"/><path d="M6.5 291l5.5-6 1.5 1.5-6 5.5zM12 283l2-1.5 1.8 1.8-1.5 2z" fill="none" stroke="#c2c2c2" stroke-width="0.9"/><path d="M12 289.5c1 0 2 .5 3.5 2" stroke="#c2c2c2" stroke-width="0.8" fill="none"/><path d="M7 301.5v-4.3a.8.8 0 0 1 1.6 0v3.3v-4.6a.8.8 0 0 1 1.6 0v4.3v-4.8a.8.8 0 0 1 1.6 0v4.8v-4a.8.8 0 0 1 1.6 0v5.3l1.3-1.6a.9.9 0 0 1 1.4 1.1l-2.6 3.8q-1 1.5-3 1.5h-1q-2.2 0-2.4-2.4z" fill="#c2c2c2"/><circle cx="10" cy="312.5" r="3" fill="none" stroke="#c2c2c2" stroke-width="1"/><path d="M12.3 314.8l3.3 3.3" stroke="#c2c2c2" stroke-width="1.3"/><rect x="5" y="326" width="4" height="4" fill="#111" stroke="#ddd" stroke-width="0.7"/><rect x="3" y="324" width="3.5" height="3.5" fill="#eee"/><path d="M14.5 325.5h1.5a1.5 1.5 0 0 1 1.5 1.5v2M13.8 325.5l1.2-1M13.8 325.5l1.2 1M17.5 329.3l-1-1.1M17.5 329.3l1-1.1" stroke="#b8b8b8" stroke-width="0.8" fill="none"/><rect x="8" y="339.5" width="11" height="11" fill="#f4f4f4" stroke="#444" stroke-width="0.6"/><path d="M8.5 350L18.5 340" stroke="#f00" stroke-width="1.3"/><rect x="2.5" y="334" width="11" height="11" fill="#fff" stroke="#3a3a3a" stroke-width="0.6"/><rect x="5" y="355" width="5.5" height="6" rx="0.8" fill="none" stroke="#777" stroke-width="0.8"/><rect x="12" y="354.5" width="6.5" height="7" rx="1" fill="#2f2f2f"/><rect x="3" y="367" width="16" height="12" rx="1" fill="#3a3a3a"/><rect x="6" y="369.5" width="10" height="7" fill="#000" stroke="#ccc" stroke-width="0.9"/><rect x="17" y="377" width="1.1" height="1.1" fill="#ccc"/><rect x="3" y="383.5" width="16" height="12" rx="1" fill="#3a3a3a"/><rect x="7" y="386.5" width="8" height="6" fill="none" stroke="#c8c8c8" stroke-width="0.9"/><rect x="7" y="386.5" width="8" height="1.6" fill="#c8c8c8"/><rect x="17" y="393" width="1.1" height="1.1" fill="#ccc"/><rect x="0" y="207" width="22" height="1" fill="#4a4a4a"/><rect x="0" y="264" width="22" height="1" fill="#4a4a4a"/><rect x="0" y="121" width="22" height="1" fill="#4d4d4d"/><rect x="906.5" y="275.5" width="90" height="12.5" rx="1" fill="#393939"/><rect x="904" y="115.5" width="96" height="1.2" fill="#444"/><rect x="946.0" y="118.5" width="1.4" height="1.2" fill="#3a3a3a"/><rect x="948.4" y="118.5" width="1.4" height="1.2" fill="#3a3a3a"/><rect x="950.8" y="118.5" width="1.4" height="1.2" fill="#3a3a3a"/><rect x="953.2" y="118.5" width="1.4" height="1.2" fill="#3a3a3a"/><rect x="955.6" y="118.5" width="1.4" height="1.2" fill="#3a3a3a"/><rect x="904" y="155.5" width="96" height="1.2" fill="#444"/><rect x="946.0" y="158.5" width="1.4" height="1.2" fill="#3a3a3a"/><rect x="948.4" y="158.5" width="1.4" height="1.2" fill="#3a3a3a"/><rect x="950.8" y="158.5" width="1.4" height="1.2" fill="#3a3a3a"/><rect x="953.2" y="158.5" width="1.4" height="1.2" fill="#3a3a3a"/><rect x="955.6" y="158.5" width="1.4" height="1.2" fill="#3a3a3a"/><rect x="904" y="195.5" width="96" height="1.2" fill="#444"/><rect x="946.0" y="198.5" width="1.4" height="1.2" fill="#3a3a3a"/><rect x="948.4" y="198.5" width="1.4" height="1.2" fill="#3a3a3a"/><rect x="950.8" y="198.5" width="1.4" height="1.2" fill="#3a3a3a"/><rect x="953.2" y="198.5" width="1.4" height="1.2" fill="#3a3a3a"/><rect x="955.6" y="198.5" width="1.4" height="1.2" fill="#3a3a3a"/><rect x="904" y="251.5" width="96" height="1.2" fill="#444"/><rect x="946.0" y="254.5" width="1.4" height="1.2" fill="#3a3a3a"/><rect x="948.4" y="254.5" width="1.4" height="1.2" fill="#3a3a3a"/><rect x="950.8" y="254.5" width="1.4" height="1.2" fill="#3a3a3a"/><rect x="953.2" y="254.5" width="1.4" height="1.2" fill="#3a3a3a"/><rect x="955.6" y="254.5" width="1.4" height="1.2" fill="#3a3a3a"/><rect x="904" y="291.5" width="96" height="1.2" fill="#444"/><rect x="946.0" y="294.5" width="1.4" height="1.2" fill="#3a3a3a"/><rect x="948.4" y="294.5" width="1.4" height="1.2" fill="#3a3a3a"/><rect x="950.8" y="294.5" width="1.4" height="1.2" fill="#3a3a3a"/><rect x="953.2" y="294.5" width="1.4" height="1.2" fill="#3a3a3a"/><rect x="955.6" y="294.5" width="1.4" height="1.2" fill="#3a3a3a"/><rect x="904" y="331.5" width="96" height="1.2" fill="#444"/><rect x="946.0" y="45.5" width="1.4" height="1.2" fill="#3a3a3a"/><rect x="948.4" y="45.5" width="1.4" height="1.2" fill="#3a3a3a"/><rect x="950.8" y="45.5" width="1.4" height="1.2" fill="#3a3a3a"/><rect x="953.2" y="45.5" width="1.4" height="1.2" fill="#3a3a3a"/><rect x="955.6" y="45.5" width="1.4" height="1.2" fill="#3a3a3a"/><path d="M910.3 55.5Q912 53.2 914.6 54V62.3Q912.5 61.4 910.3 62.3Z" fill="#cfcfcf"/><path d="M920.7 55.5Q919 53.2 916.4 54V62.3Q918.5 61.4 920.7 62.3Z" fill="#cfcfcf"/><path d="M915.5 51.5v12" stroke="#dcdcdc" stroke-width="0.8"/><path d="M912 56v5M919 56v5" stroke="#9a9a9a" stroke-width="0.6"/><path d="M910.3 71.3l5.2-3.1 5.2 3.1-5.2 3.1z" fill="#cfcfcf"/><path d="M910.8 74.2l4.7 2.9 4.7-2.9" stroke="#cfcfcf" stroke-width="1.4" fill="none"/><rect x="910.5" y="86" width="10" height="7" fill="#b8b8b8"/><rect x="911.3" y="86.8" width="2.6" height="2.2" fill="#e8e8e8"/><rect x="914.6" y="86.8" width="2.6" height="2.2" fill="#e8e8e8"/><rect x="917.9" y="86.8" width="1.9" height="2.2" fill="#e8e8e8"/><path d="M910.5 89.5h10" stroke="#6a6a6a" stroke-width="0.7"/><path d="M914 89.5v3.5M917.5 89.5v3.5" stroke="#6a6a6a" stroke-width="0.7"/><path d="M910.5 109.5V100.8h3l1 1.2h6v7.5z" fill="none" stroke="#9a9a9a" stroke-width="0.8"/><path d="M912.5 108.5v-2.2q1-1.5 2-.5q1-1.5 2.5 0q1-1 1.8.5v2.2z" fill="#cfcfcf"/><path d="M910.5 141.8h10M910.5 150.8h10M910.5 146.3h2M918.5 146.3h2" stroke="#cfcfcf" stroke-width="0.8"/><rect x="912.3" y="143.2" width="6.4" height="6.2" fill="none" stroke="#8a8a8a" stroke-width="0.6"/><ellipse cx="915.5" cy="146.3" rx="2.2" ry="2.6" fill="#cfcfcf"/><rect x="910.5" y="166.5" width="10" height="1.3" fill="#cfcfcf"/><rect x="910.5" y="169.5" width="10" height="1.3" fill="#cfcfcf"/><rect x="910.5" y="172.5" width="10" height="1.3" fill="#cfcfcf"/><defs><linearGradient id="pg" x1="0" x2="1"><stop offset="0" stop-color="#333"/><stop offset="1" stop-color="#ddd"/></linearGradient></defs><rect x="910.5" y="182" width="10" height="7.5" fill="url(#pg)" stroke="#aaa" stroke-width="0.7"/><rect x="910.5" y="205" width="8.5" height="10" fill="#bdbdbd"/><path d="M912 212h5.5M912 213.8h5.5" stroke="#666" stroke-width="0.6"/><circle cx="914" cy="224.5" r="3.6" fill="#cfcfcf"/><path d="M917 226l3.5 3-1.8.3 1 2-1 .4-1-2-1.3 1z" fill="#cfcfcf" stroke="#535353" stroke-width="0.5"/><rect x="910.5" y="281.5" width="4" height="4" fill="none" stroke="#cfcfcf" stroke-width="0.7"/><rect x="912" y="283" width="4" height="4" fill="none" stroke="#cfcfcf" stroke-width="0.7"/><rect x="918.5" y="301" width="0.9" height="10" fill="#cfcfcf"/><rect x="910.5" y="321.5" width="4" height="4" fill="none" stroke="#cfcfcf" stroke-width="0.7"/><rect x="912" y="323" width="4" height="4" fill="none" stroke="#cfcfcf" stroke-width="0.7"/><path d="M992 38l-2 2 2 2M995 38l-2 2 2 2" stroke="#aaa" stroke-width="0.8" fill="none"/><rect x="238.5" y="290.5" width="1.2" height="1" fill="#777"/><rect x="247" y="290.5" width="1.2" height="1" fill="#777"/><rect x="270" y="290.5" width="1.2" height="1" fill="#777"/><rect x="311" y="290.5" width="1.2" height="1" fill="#777"/><rect x="328" y="290.5" width="1.2" height="1" fill="#777"/><rect x="345" y="290.5" width="1.2" height="1" fill="#777"/></svg>
<div class="ct" style="left:32px;top:39.5px;font-size:9px;color:#e0e0e0">×</div>

<div class="ic" style="left:12px;top:7px;width:12px;font-size:8.5px;text-align:center;color:#d8d8d8">A</div><div class="ic" style="left:15.5px;top:22px;font-size:8.5px;font-weight:bold;color:#cfcfcf">¶</div><div class="ic" style="left:126.5px;top:9.5px;font-family:'Liberation Serif';font-weight:bold;font-size:6px;color:#c8c8c8">T</div><div class="ic" style="left:130.5px;top:5.6px;font-family:'Liberation Serif';font-weight:bold;font-size:12px;color:#c8c8c8">T</div><div class="ic" style="left:131px;top:21px;font-family:'Liberation Sans';font-size:6px;color:#c8c8c8;line-height:5px">A<br>A</div><div class="ic" style="left:197.5px;top:6.6000000000000005px;font-family:'Liberation Serif';font-weight:bold;font-size:9px;color:#c8c8c8">T</div><div class="ic" style="left:202.5px;top:6.6000000000000005px;font-family:'Liberation Serif';font-weight:bold;font-size:9px;color:#c8c8c8">T</div><div class="ic" style="left:213.5px;top:6.6000000000000005px;font-family:'Liberation Serif';font-weight:bold;font-size:9px;color:#c8c8c8">T</div><div class="ic" style="left:220px;top:5px;font-size:4px;color:#c8c8c8">1</div><div class="ic" style="left:230.5px;top:6.6000000000000005px;font-family:'Liberation Serif';font-weight:bold;font-size:9px;color:#c8c8c8">T</div><div class="ic" style="left:197.5px;top:21.599999999999998px;font-family:'Liberation Serif';font-weight:bold;font-size:9px;color:#c8c8c8">T</div><div class="ic" style="left:203px;top:24.5px;font-family:'Liberation Serif';font-weight:bold;font-size:7px;color:#c8c8c8">T</div><div class="ic" style="left:213.5px;top:21.599999999999998px;font-family:'Liberation Serif';font-weight:bold;font-size:9px;color:#c8c8c8">T</div><div class="ic" style="left:220px;top:26px;font-size:4px;color:#c8c8c8">1</div><div class="ic" style="left:230.5px;top:21.599999999999998px;font-family:'Liberation Serif';font-weight:bold;font-size:9px;color:#c8c8c8">T</div><div class="ic" style="left:247.5px;top:7.3px;font-size:8.5px;font-weight:bold;letter-spacing:-1.8px;color:#c8c8c8">VA</div><div class="ic" style="left:248.5px;top:21.3px;font-size:7px;font-weight:bold;letter-spacing:-1.3px;color:#555">VA</div><div class="ic" style="left:319.5px;top:5.8px;font-family:'Liberation Serif';font-weight:bold;font-size:11px;color:#c8c8c8">T</div><div class="ic" style="left:316px;top:21.5px;font-size:8px;color:#c8c8c8">A</div><div class="ic" style="left:382.5px;top:6.0px;font-family:'Liberation Serif';font-weight:normal;font-size:10px;color:#c8c8c8">T</div><div class="ic" style="left:383px;top:20px;font-family:'Liberation Serif';font-style:italic;font-size:11px;color:#c8c8c8">T</div><div class="ic" style="left:451.5px;top:4.6px;width:13px;text-align:center;font-family:'Liberation Serif';font-weight:bold;font-size:13.5px;color:#000">T</div><div class="ic" style="left:485.5px;top:6.5px;font-size:10.5px;color:#c8c8c8">A.</div><div class="rl" style="left:73.17px;top:52.6px">1</div><div class="rl" style="left:133.00px;top:52.6px">0</div><div class="rl" style="left:192.83px;top:52.6px">1</div><div class="rl" style="left:252.66px;top:52.6px">2</div><div class="rl" style="left:312.49px;top:52.6px">3</div><div class="rl" style="left:372.32px;top:52.6px">4</div><div class="rl" style="left:432.15px;top:52.6px">5</div><div class="rl" style="left:491.98px;top:52.6px">6</div><div class="rl" style="left:551.81px;top:52.6px">7</div><div class="rl" style="left:611.64px;top:52.6px">8</div><div class="rl" style="left:671.47px;top:52.6px">9</div><div class="rl" style="left:731.30px;top:52.6px">10</div><div class="rl" style="left:791.13px;top:52.6px">11</div><div class="rl" style="left:850.96px;top:52.6px">12</div><div class="rl" style="left:25.6px;top:62.30px">0</div><div class="rl" style="left:25.6px;top:122.13px">1</div><div class="rl" style="left:25.6px;top:181.96px">2</div><div class="rl" style="left:25.6px;top:241.79px">3</div><div class="rl" style="left:25.6px;top:301.62px">4</div><div class="rl" style="left:25.6px;top:361.45px">5</div><div class="rl" style="left:25.6px;top:421.28px">6</div><div class="rl" style="left:25.6px;top:481.11px">7</div><div class="ic" style="left:6px;top:123px;font-family:'Liberation Serif';font-weight:bold;font-size:12px;color:#e0e0e0">T</div><div class="ic" style="left:2.5px;top:333.6px;width:11px;text-align:center;font-family:'Liberation Serif';font-weight:bold;font-size:12.5px;color:#000">T</div><div class="ic" style="left:13px;top:354px;font-family:'Liberation Serif';font-weight:bold;font-size:7px;color:#ddd">T</div><div class="ic" style="left:910.5px;top:123px;font-family:'Liberation Serif';font-style:italic;font-size:12px;color:#cfcfcf">A</div><div class="ic" style="left:912px;top:204px;font-size:5px;color:#555">T</div><div class="ic" style="left:910px;top:236px;font-family:'Liberation Serif';font-style:italic;font-size:10.5px;color:#cfcfcf">fx</div><div class="ic" style="left:911px;top:260px;font-size:10px;font-weight:bold;color:#bdbdbd">¶</div><div class="ic" style="left:914.5px;top:276px;font-size:10px;font-weight:bold;color:#cfcfcf">¶</div><div class="ic" style="left:910px;top:300px;font-size:10.5px;color:#cfcfcf">A</div><div class="ic" style="left:914.5px;top:314.5px;font-size:9px;color:#cfcfcf">A</div><div class="tx" style="left:177.00px;top:104.45px;font-size:8.8px;transform:scaleX(0.9398);word-spacing:0.967px">it’s your older sister. She never took the time to figure out</div><div class="tx" style="left:177.00px;top:117.78px;font-size:8.8px;transform:scaleX(0.9398);word-spacing:0.215px">what she wanted and just did what your mom told her to do.</div><div class="tx" style="left:177.00px;top:131.12px;font-size:8.8px;transform:scaleX(0.9398);word-spacing:0.748px">Technically, she’s doing everything “right,” but you get the</div><div class="tx" style="left:177.00px;top:144.45px;font-size:8.8px;transform:scaleX(0.9398)">sense that she’s not happy.</div><div class="tx" style="left:189.70px;top:157.78px;font-size:8.8px;transform:scaleX(0.9398);word-spacing:-0.686px">A client I’ll call Maya — none of the names I’m using here</div><div class="tx" style="left:177.00px;top:171.12px;font-size:8.8px;transform:scaleX(0.9398);word-spacing:0.750px">are real, but the stories are — was encouraged to apply for</div><div class="tx" style="left:177.00px;top:184.45px;font-size:8.8px;transform:scaleX(0.9398);word-spacing:0.450px">a master’s degree by one of her professors. And to help pay</div><div class="tx" style="left:177.00px;top:197.78px;font-size:8.8px;transform:scaleX(0.9398);word-spacing:-0.239px">for it, she could even work in his lab. A master’s degree and a</div><div class="tx" style="left:177.00px;top:211.11px;font-size:8.8px;transform:scaleX(0.9398);word-spacing:-0.196px">guaranteed job to help pay it off didn’t sound too shabby. But</div><div class="tx" style="left:177.00px;top:224.45px;font-size:8.8px;transform:scaleX(0.9398);word-spacing:-0.424px">Maya noticed that her professor was fairly isolated in that lab.</div><div class="tx" style="left:177.50px;top:252.95px;font-size:8.8px;transform:scaleX(0.9398);word-spacing:0.042px">to tend to some urgent business need, and he’d be damned if</div><div class="tx" style="left:177.50px;top:266.28px;font-size:8.8px;transform:scaleX(0.9398);word-spacing:0.173px">that was going to be his life too. So instead of falling in line</div><div class="tx" style="left:177.50px;top:279.62px;font-size:8.8px;transform:scaleX(0.9398)">and doing what was expected of him, he said no.</div><div class="tx" style="left:178.50px;top:295.45px;font-size:8.8px;transform:scaleX(0.9398);word-spacing:0.271px">wrong path. The people you think of and think, “Yuck, I SO</div><div class="tx" style="left:178.50px;top:308.78px;font-size:8.8px;transform:scaleX(0.9398);word-spacing:-0.231px">do not want that life” may be lovely people, but for right now</div><div class="tx" style="left:178.50px;top:322.12px;font-size:8.8px;transform:scaleX(0.9398)">let them serve as career cautionary tales.</div><div class="tx" style="left:177.00px;top:343.25px;font-size:8.8px;transform:scaleX(0.9398);word-spacing:0.624px">about the solitary nature of lab work, or for that matter, the</div><div class="tx" style="left:177.00px;top:356.58px;font-size:8.8px;transform:scaleX(0.9398);word-spacing:0.411px">area of study. So even though she didn’t know what she <i>did</i></div><div class="tx" style="left:177.00px;top:369.92px;font-size:8.8px;transform:scaleX(0.9398)">want, that particular option was a no for Maya.</div><div class="tx" style="left:189.70px;top:383.25px;font-size:8.8px;transform:scaleX(0.9398);word-spacing:-0.234px">Another client, Jerome, was groomed for the family busi-</div><div class="tx" style="left:177.00px;top:396.58px;font-size:8.8px;transform:scaleX(0.9398);word-spacing:-0.042px">ness. In fact, he already knew his father’s business inside out</div><div class="tx" style="left:177.00px;top:423.45px;font-size:8.8px;transform:scaleX(0.9398);word-spacing:0.387px">would be even <i>more</i> prepared to take over the business. But</div><div class="tx" style="left:177.00px;top:436.78px;font-size:8.8px;transform:scaleX(0.9398);word-spacing:0.993px">he had major reservations. He had no interest in living the</div><div class="tx" style="left:177.00px;top:450.12px;font-size:8.8px;transform:scaleX(0.9398);word-spacing:0.769px">lifestyle that his father had. He couldn’t remember a single</div><div class="tx" style="left:177.00px;top:463.45px;font-size:8.8px;transform:scaleX(0.9398);word-spacing:1.047px">family holiday that wasn’t interrupted by his father having</div><div class="tx" style="left:483.00px;top:104.45px;font-size:8.8px;transform:scaleX(0.9398);word-spacing:0.139px">to tend to some urgent business need, and he’d be damned if</div><div class="tx" style="left:483.00px;top:117.78px;font-size:8.8px;transform:scaleX(0.9398);word-spacing:0.255px">that was going to be his life too. So instead of falling in line</div><div class="tx" style="left:483.00px;top:131.12px;font-size:8.8px;transform:scaleX(0.9398)">and doing what was expected of him, he said no.</div><div class="tx" style="left:496.30px;top:144.45px;font-size:8.8px;transform:scaleX(0.9398);word-spacing:2.311px">Sometimes having a good clear picture of what you</div><div class="tx" style="left:483.00px;top:173.05px;font-size:8.8px;transform:scaleX(0.9398);word-spacing:0.071px">DON’T want keeps you from accidentally straying down the</div><div class="tx" style="left:483.00px;top:186.38px;font-size:8.8px;transform:scaleX(0.9398);word-spacing:0.299px">wrong path. The people you think of and think, "Yuck, I SO</div><div class="tx" style="left:483.00px;top:199.72px;font-size:8.8px;transform:scaleX(0.9398);word-spacing:-0.205px">do not want that life" may be lovely people, but for right now</div><div class="tx" style="left:483.00px;top:213.05px;font-size:8.8px;transform:scaleX(0.9398)">let them serve as career cautionary tales.</div><div class="tx" style="left:483.00px;top:245.75px;font-size:8.8px;transform:scaleX(0.9398);word-spacing:0.967px">it’s your older sister. She never took the time to figure out</div><div class="tx" style="left:483.00px;top:259.08px;font-size:8.8px;transform:scaleX(0.9398);word-spacing:0.215px">what she wanted and just did what your mom told her to do.</div><div class="tx" style="left:483.00px;top:272.42px;font-size:8.8px;transform:scaleX(0.9398);word-spacing:0.748px">Technically, she’s doing everything “right,” but you get the</div><div class="tx" style="left:483.00px;top:285.75px;font-size:8.8px;transform:scaleX(0.9398)">sense that she’s not happy.</div><div class="tx" style="left:483.00px;top:318.95px;font-size:8.8px;transform:scaleX(0.9398);word-spacing:-0.055px">Your Aunt Marg spots you at the family barbeque. You know</div><div class="tx" style="left:483.00px;top:332.28px;font-size:8.8px;transform:scaleX(0.9398);word-spacing:0.989px">exactly what’s coming so you try to make a run for it, but</div><div class="tx" style="left:483.00px;top:345.62px;font-size:8.8px;transform:scaleX(0.9398);word-spacing:0.431px">she’s too quick and she pins you between the lemonade and</div><div class="tx" style="left:483.00px;top:358.95px;font-size:8.8px;transform:scaleX(0.9398);word-spacing:0.469px">the dessert table. You haven’t seen her since graduation and</div><div class="tx" style="left:483.00px;top:372.28px;font-size:8.8px;transform:scaleX(0.9398);word-spacing:0.122px">she wastes no time getting straight to the point. Less than 30</div><div class="tx" style="left:483.00px;top:385.62px;font-size:8.8px;transform:scaleX(0.9398);word-spacing:1.272px">seconds into the awkward conversation she utters the four</div><div class="tx" style="left:483.00px;top:398.95px;font-size:8.8px;transform:scaleX(0.9398);word-spacing:1.530px">words most dreaded by twentysomethings everywhere: <i>So</i></div><div class="tx" style="left:483.00px;top:412.28px;font-size:8.8px;transform:scaleX(0.9398)"><i>what’s your plan?</i></div><div class="tx" style="left:496.00px;top:425.61px;font-size:8.8px;transform:scaleX(0.9398);word-spacing:1.850px">You mutter, "Oh, you know, I’m just exploring some</div><div class="tx" style="left:483.00px;top:438.95px;font-size:8.8px;transform:scaleX(0.9398);word-spacing:-0.206px">options." But what you really want to do is karate chop her in</div><div class="tx" style="left:483.00px;top:452.28px;font-size:8.8px;transform:scaleX(0.9398);word-spacing:-0.274px">the neck and drown her in her own bean dip while screaming,</div><div class="ut" style="left:34.0px;top:7px;font-size:7.3px;font-weight:normal;color:#e6e6e6;transform:scaleX(0.8600);"></div><div class="ut" style="left:33.5px;top:22.5px;font-size:7.3px;font-weight:normal;color:#e6e6e6;transform:scaleX(0.8606);">Regular</div><div class="ut" style="left:45px;top:7px;font-size:7.3px;font-weight:normal;color:#e6e6e6;transform:scaleX(0.8484);">Fournier MT Regular</div><div class="ut" style="left:152.0px;top:7px;font-size:7.3px;font-weight:normal;color:#e6e6e6;transform:scaleX(0.9562);">11 pt</div><div class="ut" style="left:152.0px;top:22.5px;font-size:7.3px;font-weight:normal;color:#e6e6e6;transform:scaleX(0.8600);">16 pt</div><div class="ut" style="left:273.0px;top:7px;font-size:7.3px;font-weight:normal;color:#e6e6e6;transform:scaleX(0.8600);">(0)</div><div class="ut" style="left:273.0px;top:22.5px;font-size:7.3px;font-weight:normal;color:#e6e6e6;transform:scaleX(0.8600);">0</div><div class="ut" style="left:342.0px;top:7px;font-size:7.3px;font-weight:normal;color:#e6e6e6;transform:scaleX(0.8600);">100%</div><div class="ut" style="left:342.0px;top:22.5px;font-size:7.3px;font-weight:normal;color:#e6e6e6;transform:scaleX(0.8600);">0 pt</div><div class="ut" style="left:407.5px;top:7px;font-size:7.3px;font-weight:normal;color:#e6e6e6;transform:scaleX(0.8600);">100%</div><div class="ut" style="left:407.5px;top:22.5px;font-size:7.3px;font-weight:normal;color:#e6e6e6;transform:scaleX(0.8600);">0°</div><div class="ut" style="left:700.0px;top:7px;font-size:7.3px;font-weight:normal;color:#e6e6e6;transform:scaleX(0.8600);">0 in</div><div class="ut" style="left:700.0px;top:22.5px;font-size:7.3px;font-weight:normal;color:#e6e6e6;transform:scaleX(0.8600);">0 in</div><div class="ut" style="left:765.5px;top:7px;font-size:7.3px;font-weight:normal;color:#e6e6e6;transform:scaleX(0.8600);">0 in</div><div class="ut" style="left:765.5px;top:22.5px;font-size:7.3px;font-weight:normal;color:#e6e6e6;transform:scaleX(0.8600);">0 in</div><div class="ut" style="left:835.0px;top:7px;font-size:7.3px;font-weight:normal;color:#e6e6e6;transform:scaleX(0.9157);">0.2222 in</div><div class="ut" style="left:835.0px;top:22.5px;font-size:7.3px;font-weight:normal;color:#e6e6e6;transform:scaleX(0.8694);">Ignore</div><div class="ut" style="left:900.0px;top:7px;font-size:7.3px;font-weight:normal;color:#e6e6e6;transform:scaleX(0.8600);">0 in</div><div class="ut" style="left:507px;top:7px;font-size:7.3px;font-weight:normal;color:#3a3a3a;transform:scaleX(0.8372);-webkit-text-stroke:0">[None]</div><div class="ut" style="left:504.5px;top:22.5px;font-size:7.3px;font-weight:normal;color:#e6e6e6;transform:scaleX(0.8140);">English: USA</div><div class="ut" style="left:925.5px;top:53.1px;font-size:7.9px;font-weight:bold;color:#f2f2f2;transform:scaleX(0.8100);">Pages</div><div class="ut" style="left:925.5px;top:69.1px;font-size:7.9px;font-weight:bold;color:#f2f2f2;transform:scaleX(0.8100);">Layers</div><div class="ut" style="left:925.5px;top:85.1px;font-size:7.9px;font-weight:bold;color:#f2f2f2;transform:scaleX(0.8100);">Swatches</div><div class="ut" style="left:925.5px;top:101.1px;font-size:7.9px;font-weight:bold;color:#f2f2f2;transform:scaleX(0.8610);">CC Libraries</div><div class="ut" style="left:925.5px;top:125.1px;font-size:7.9px;font-weight:bold;color:#f2f2f2;transform:scaleX(0.8100);">Glyphs</div><div class="ut" style="left:925.5px;top:141.1px;font-size:7.9px;font-weight:bold;color:#f2f2f2;transform:scaleX(0.8100);">Text Wrap</div><div class="ut" style="left:925.5px;top:165.1px;font-size:7.9px;font-weight:bold;color:#f2f2f2;transform:scaleX(0.8100);">Stroke</div><div class="ut" style="left:925.5px;top:181.1px;font-size:7.9px;font-weight:bold;color:#f2f2f2;transform:scaleX(0.8100);">Gradient</div><div class="ut" style="left:925.5px;top:205.1px;font-size:7.9px;font-weight:bold;color:#f2f2f2;transform:scaleX(0.8100);">Story</div><div class="ut" style="left:925.5px;top:221.1px;font-size:7.9px;font-weight:bold;color:#f2f2f2;transform:scaleX(0.8100);">Hyperlinks</div><div class="ut" style="left:925.5px;top:237.1px;font-size:7.9px;font-weight:bold;color:#f2f2f2;transform:scaleX(0.8100);">Effects</div><div class="ut" style="left:925.5px;top:261.1px;font-size:7.9px;font-weight:bold;color:#f2f2f2;transform:scaleX(0.8100);">Paragraph</div><div class="ut" style="left:925.5px;top:277.1px;font-size:7.9px;font-weight:bold;color:#f2f2f2;transform:scaleX(0.8529);">Paragraph Styles</div><div class="ut" style="left:925.5px;top:301.1px;font-size:7.9px;font-weight:bold;color:#f2f2f2;transform:scaleX(0.8100);">Character</div><div class="ut" style="left:925.5px;top:317.1px;font-size:7.9px;font-weight:bold;color:#f2f2f2;transform:scaleX(0.8572);">Character Styles</div><div class="ut" style="left:42px;top:39.7px;font-size:7.8px;font-weight:bold;color:#f4f4f4;transform:scaleX(0.7915);">careerrookie_txt.indd @ 100%</div>
</body></html>
